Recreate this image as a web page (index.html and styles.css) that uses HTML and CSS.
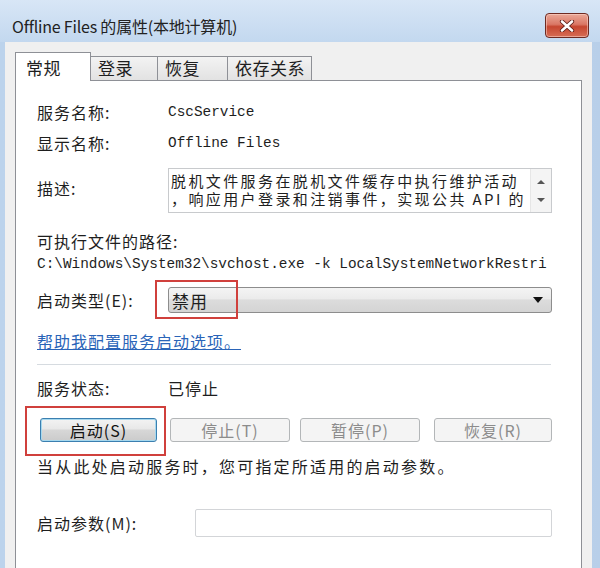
FILE: index.html
```html
<!DOCTYPE html>
<html lang="zh-CN">
<head>
    <meta charset="UTF-8">
    <title>Offline Files 的属性(本地计算机)</title>
    <link rel="stylesheet" href="styles.css">
</head>
<body>
    <div class="window">
        <div class="titlebar">
            <span class="title">Offline Files 的属性(本地计算机)</span>
            <button class="btn-close" type="button">
                <svg width="16" height="12" viewBox="0 0 16 12">
                    <path d="M3 1.5 L13 10.5 M13 1.5 L3 10.5" stroke="#5a1a14" stroke-width="4.2" stroke-linecap="round"/>
                    <path d="M3 1.5 L13 10.5 M13 1.5 L3 10.5" stroke="#ffffff" stroke-width="2.6" stroke-linecap="round"/>
                </svg>
            </button>
        </div>

        <div class="client">
            <div class="tabs">
                <div class="tab active">常规</div>
                <div class="tab tab-login">登录</div>
                <div class="tab tab-recover">恢复</div>
                <div class="tab tab-deps">依存关系</div>
            </div>

            <div class="panel">
                <div class="row row-name">
                    <span class="label">服务名称:</span>
                    <span class="value mono">CscService</span>
                </div>
                <div class="row row-display">
                    <span class="label">显示名称:</span>
                    <span class="value mono">Offline Files</span>
                </div>
                <div class="row row-desc">
                    <span class="label label-desc">描述:</span>
                    <div class="desc-box">
                        <div class="desc-text">
                            <div>脱机文件服务在脱机文件缓存中执行维护活动</div>
                            <div>，响应用户登录和注销事件，实现公共 API 的</div>
                        </div>
                        <div class="scrollbar">
                            <span class="arrow-up"></span>
                            <span class="arrow-down"></span>
                        </div>
                    </div>
                </div>
                <div class="row row-path-label">
                    <span>可执行文件的路径:</span>
                </div>
                <div class="row row-path">
                    <span class="mono path">C:\Windows\System32\svchost.exe -k LocalSystemNetworkRestri</span>
                </div>
                <div class="row row-type">
                    <span class="label">启动类型(E):</span>
                    <div class="select">
                        <span class="select-value">禁用</span>
                        <span class="select-arrow"></span>
                        <span class="mark mark-select"></span>
                    </div>
                </div>
                <div class="row row-link">
                    <a href="#" class="help-link">帮助我配置服务启动选项。</a>
                </div>
                <div class="separator"></div>
                <div class="row row-status">
                    <span class="label">服务状态:</span>
                    <span class="value">已停止</span>
                </div>
                <div class="row row-buttons">
                    <button type="button" class="btn btn-start">启动(S)<span class="mark mark-start"></span></button>
                    <button type="button" class="btn btn-stop" disabled>停止(T)</button>
                    <button type="button" class="btn btn-pause" disabled>暂停(P)</button>
                    <button type="button" class="btn btn-resume" disabled>恢复(R)</button>
                </div>
                <div class="row row-hint">
                    <span>当从此处启动服务时，您可指定所适用的启动参数。</span>
                </div>
                <div class="row row-params">
                    <span class="label label-params">启动参数(M):</span>
                    <input type="text" class="params-input">
                </div>
            </div>
        </div>
    </div>
</body>
</html>
```

FILE: styles.css
```css
body {
    margin: 0;
    width: 600px;
    height: 568px;
    overflow: hidden;
    background-color: #b9d1ea;
    font-family: "Noto Sans CJK SC", "Noto Sans", sans-serif;
    font-size: 16px;
    color: #1e1e1e;
}

.window {
    height: 100%;
    display: flex;
    flex-direction: column;
    background: linear-gradient(to right, #bcd3ec, #c6daf0 60%, #b8cfe9);
}

/* title bar */
.titlebar {
    height: 42px;
    flex-shrink: 0;
    display: flex;
    align-items: flex-start;
    justify-content: space-between;
    box-sizing: border-box;
    padding: 13px 11px 0 12px;
    background: linear-gradient(#d8e6f6, #c3d8ef);
}

.title {
    font-size: 16px;
    line-height: 26px;
    color: #222;
    letter-spacing: -0.2px;
}

.btn-close {
    width: 44px;
    height: 25px;
    padding: 0;
    border: 1px solid #6e2a22;
    border-radius: 4px;
    background: linear-gradient(#eaa898, #da7765 45%, #c64630 55%, #d66d55);
    box-shadow: inset 0 0 0 1px rgba(255, 220, 210, 0.5);
    display: flex;
    align-items: center;
    justify-content: center;
}

/* client area */
.client {
    flex: 1;
    margin: 0 8px 0 5px;
    background-color: #f0f0f0;
    padding: 10px 10px 0 10px;
    display: flex;
    flex-direction: column;
}

.tabs {
    display: flex;
    align-items: flex-end;
    height: 28px;
    position: relative;
    z-index: 1;
}

.tab {
    box-sizing: border-box;
    height: 24px;
    border: 1px solid #8e9096;
    border-bottom: none;
    border-left: none;
    background: linear-gradient(#f3f3f3, #e2e2e2);
    line-height: 22px;
    padding-left: 7px;
    font-size: 17px;
    letter-spacing: 0.5px;
}

.tab.active {
    height: 29px;
    margin-bottom: -1px;
    border-left: 1px solid #8e9096;
    background: #fff;
    padding-left: 10px;
    line-height: 30px;
}

.tab.active { width: 76px; }
.tab-login { width: 67px; }
.tab-recover { width: 70px; }
.tab-deps { width: 84px; }

.panel {
    flex: 1;
    background: #fff;
    border: 1px solid #8e9096;
    border-bottom: none;
    padding: 20px 29px 0 21px;
    letter-spacing: 1px;
}

.row {
    display: flex;
    align-items: center;
    height: 22px;
}

.label {
    width: 131px;
    flex-shrink: 0;
}

.mono {
    font-family: "Liberation Mono", "DejaVu Sans Mono", monospace;
    font-size: 14.4px;
    letter-spacing: 0;
}

.row-display { margin-top: 9px; }

.row-desc {
    height: auto;
    align-items: flex-start;
    margin-top: 14px;
}

.label-desc { margin-top: 8px; }

.desc-box {
    flex: 1;
    height: 45px;
    box-sizing: border-box;
    border: 1px solid #c8cacd;
    display: flex;
}

.desc-text {
    flex: 1;
    padding: 3px 0 0 2px;
    font-size: 15px;
    line-height: 18px;
    letter-spacing: 2.4px;
    white-space: nowrap;
    overflow: hidden;
}

.desc-text div {
    height: 18px;
}

.scrollbar {
    width: 20px;
    background: #f4f4f4;
    border-left: 1px solid #e6e6e6;
    position: relative;
}

.arrow-up,
.arrow-down {
    position: absolute;
    left: 6px;
    width: 0;
    height: 0;
    border-left: 4px solid transparent;
    border-right: 4px solid transparent;
}

.arrow-up {
    top: 11px;
    border-bottom: 4px solid #555;
}

.arrow-down {
    bottom: 10px;
    border-top: 4px solid #555;
}

.row-path-label { margin-top: 17px; }

.row-path {
    margin-top: 1px;
    overflow: hidden;
    white-space: nowrap;
}

.row-type {
    height: 26px;
    margin-top: 12px;
}

.select {
    flex: 1;
    height: 26px;
    box-sizing: border-box;
    border: 1px solid #8d8d8d;
    border-radius: 3px;
    background: linear-gradient(#f4f4f4, #ebebeb 45%, #dcdcdc 50%, #d4d4d4);
    display: flex;
    align-items: center;
    justify-content: space-between;
    padding: 0 8px 0 3px;
    position: relative;
    font-size: 17px;
}

.select-arrow {
    width: 0;
    height: 0;
    border-left: 5px solid transparent;
    border-right: 5px solid transparent;
    border-top: 6px solid #111;
}

/* red highlight frames */
.mark {
    position: absolute;
    border: 2px solid #d0403c;
    box-sizing: border-box;
}

.mark-select {
    left: -14px;
    top: -8px;
    width: 83px;
    height: 39px;
}

.row-link { margin-top: 17px; }

.help-link {
    color: #2a64b8;
    text-decoration: underline;
}

.separator {
    height: 1px;
    margin-top: 12px;
    margin-right: 1px;
    background: #d6dbe0;
}

.row-status { margin-top: 12px; }

.row-buttons {
    height: 24px;
    margin-top: 19px;
    padding-left: 3px;
    gap: 13px;
}

.btn {
    height: 24px;
    box-sizing: border-box;
    font-family: inherit;
    font-size: 16px;
    letter-spacing: 1px;
    line-height: 20px;
    border-radius: 3px;
    padding: 0;
}

.btn-start {
    width: 117px;
    position: relative;
    color: #111;
    border: 1px solid #3b7fb0;
    background: linear-gradient(#f3f3f3, #e8e8e8 45%, #d7d7d7 50%, #cbcbcb);
    box-shadow: inset 0 0 0 1px #a6d8ee;
}

.btn[disabled] {
    width: 120px;
    color: #8c8c8c;
    border: 1px solid #b3b6b8;
    background: #f4f4f4;
}

.btn-pause { margin-left: -3px; }

.btn-resume {
    margin-left: 1px;
}

.btn.btn-resume { width: 118px; }

.mark-start {
    left: -16px;
    top: -13px;
    width: 141px;
    height: 50px;
}

.row-hint {
    margin-top: 13px;
    letter-spacing: 2.2px;
}

.row-params {
    height: 28px;
    margin-top: 32px;
}

.label-params { width: 158px; }

.params-input {
    flex: 1;
    height: 28px;
    box-sizing: border-box;
    border: 1px solid #d3d5d8;
    border-radius: 2px;
    background: #fff;
}
```
